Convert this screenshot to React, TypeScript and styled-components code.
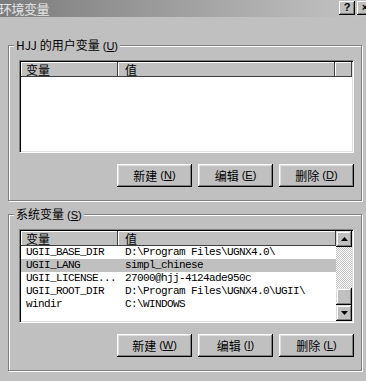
import React from 'react';
import styled, { createGlobalStyle } from 'styled-components';

const GlobalStyle = createGlobalStyle`
  html, body {
    margin: 0;
    background: #c0c0c0;
  }
`;

const Window = styled.div`
  width: 366px;
  height: 381px;
  overflow: hidden;
  background: #c0c0c0;
  font-family: "Noto Sans CJK SC", "DejaVu Sans", sans-serif;
  font-size: 12px;
  color: #000;
  display: flex;
  flex-direction: column;
`;

const TitleBar = styled.div`
  height: 17px;
  flex-shrink: 0;
  display: flex;
  align-items: center;
  justify-content: space-between;
  background: linear-gradient(to right, #7c7c7c, #c4c4c4);
`;

const Title = styled.span`
  color: #e6e6e6;
  font-size: 13px;
  line-height: 17px;
  margin-left: -1px;
  letter-spacing: -0.5px;
`;

const TitleButtons = styled.div`
  display: flex;
  gap: 2px;
  margin-right: -7px;
  align-self: flex-start;
  padding-top: 1px;
`;

const CaptionButton = styled.div`
  width: 16px;
  height: 14px;
  box-sizing: border-box;
  background: #c0c0c0;
  box-shadow: inset -1px -1px #000, inset 1px 1px #fff, inset -2px -2px #808080;
  display: flex;
  align-items: center;
  justify-content: center;
  font-family: "Liberation Sans", sans-serif;
  font-weight: bold;
  font-size: 11px;
  line-height: 1;
  padding-bottom: 1px;
`;

const Group = styled.fieldset<{ $first?: boolean }>`
  margin: ${p => (p.$first ? '21px' : '6px')} 0 0 8px;
  width: 354px;
  box-sizing: border-box;
  padding: 8px 7px 13px 10px;
  border: 1px solid #808080;
  box-shadow: inset 1px 1px 0 #fff, 1px 1px 0 #fff;
  min-width: 0;
`;

const Legend = styled.legend`
  padding: 0 2px;
  margin-left: -5px;
  line-height: 14px;
  height: 14px;
  background: #c0c0c0;
  white-space: nowrap;
`;

const Key = styled.span`
  font-family: "Liberation Sans", sans-serif;
  font-size: 11px;
  margin-left: 3px;

  & u {
    text-underline-offset: 1px;
  }
`;

const ListBox = styled.div<{ $height: number }>`
  width: 335px;
  height: ${p => p.$height}px;
  box-sizing: border-box;
  background: #fff;
  border: 1px solid;
  border-color: #808080 #fff #fff #808080;
  box-shadow: inset 1px 1px #000, inset -1px -1px #dfdfdf;
  padding: 1px;
  display: flex;
  overflow: hidden;
`;

const ListBody = styled.div`
  flex: 1;
  display: flex;
  flex-direction: column;
  min-width: 0;
`;

const Header = styled.div`
  display: flex;
  height: 15px;
  flex-shrink: 0;
`;

const HeaderCell = styled.div<{ $width?: number; $first?: boolean }>`
  ${p => (p.$width ? `width: ${p.$width}px;` : 'flex: 1;')}
  flex-shrink: 0;
  box-sizing: border-box;
  background: #c0c0c0;
  box-shadow: inset -1px -1px #404040, inset 1px 1px #fff;
  padding-left: ${p => (p.$first ? 5 : 7)}px;
  font-size: 12px;
  line-height: 15px;
  white-space: nowrap;
`;

const Row = styled.div<{ $selected?: boolean }>`
  display: flex;
  height: 13px;
  background: ${p => (p.$selected ? '#c0c0c0' : 'transparent')};
  font-family: "Liberation Mono", monospace;
  font-size: 11px;
  letter-spacing: -0.6px;
  line-height: 13px;
  white-space: nowrap;
`;

const Cell = styled.div<{ $width?: number }>`
  ${p => (p.$width ? `width: ${p.$width}px;` : 'flex: 1;')}
  box-sizing: border-box;
  padding-left: ${p => (p.$width ? 5 : 7)}px;
  overflow: hidden;
`;

const ScrollBar = styled.div`
  width: 16px;
  flex-shrink: 0;
  display: flex;
  flex-direction: column;
`;

const ScrollButton = styled.div`
  width: 16px;
  height: 16px;
  box-sizing: border-box;
  background: #c0c0c0;
  box-shadow: inset -1px -1px #000, inset 1px 1px #dfdfdf, inset -2px -2px #808080, inset 2px 2px #fff;
  display: flex;
  align-items: center;
  justify-content: center;
`;

const Track = styled.div`
  flex: 1;
  display: flex;
  flex-direction: column;
  justify-content: flex-end;
  background: repeating-conic-gradient(#c0c0c0 0 25%, #fff 0 50%) 0 0 / 2px 2px;
`;

const Thumb = styled.div`
  height: 17px;
  box-sizing: border-box;
  background: #c0c0c0;
  box-shadow: inset -1px -1px #000, inset 1px 1px #dfdfdf, inset -2px -2px #808080, inset 2px 2px #fff;
`;

const ButtonRow = styled.div`
  display: flex;
  justify-content: flex-end;
  gap: 6px;
  margin-top: 11px;
`;

const Button = styled.button`
  width: 75px;
  height: 23px;
  margin: 0;
  padding: 0 0 1px;
  border: none;
  background: #c0c0c0;
  box-shadow: inset -1px -1px #000, inset 1px 1px #fff, inset -2px -2px #808080, inset 2px 2px #dfdfdf;
  font-family: "Noto Sans CJK SC", sans-serif;
  font-size: 12px;
  color: #000;
  display: flex;
  align-items: center;
  justify-content: center;
`;

const Arrow = ({ up }: { up?: boolean }) => (
  <svg width="7" height="4" viewBox="0 0 7 4">
    <path d={up ? 'M3.5 0 L7 4 L0 4 Z' : 'M0 0 L7 0 L3.5 4 Z'} fill="#000" />
  </svg>
);

const Mnemonic = ({ k }: { k: string }) => (
  <Key>
    (<u>{k}</u>)
  </Key>
);

const systemVars = [
  ['UGII_BASE_DIR', 'D:\\Program Files\\UGNX4.0\\'],
  ['UGII_LANG', 'simpl_chinese'],
  ['UGII_LICENSE...', '27000@hjj-4124ade950c'],
  ['UGII_ROOT_DIR', 'D:\\Program Files\\UGNX4.0\\UGII\\'],
  ['windir', 'C:\\WINDOWS'],
];

const App = (): React.ReactElement => {
  return (
    <>
      <GlobalStyle />
      <Window>
        <TitleBar>
          <Title>环境变量</Title>
          <TitleButtons>
            <CaptionButton>?</CaptionButton>
            <CaptionButton>×</CaptionButton>
          </TitleButtons>
        </TitleBar>

        <Group $first>
          <Legend>
            HJJ 的用户变量<Mnemonic k="U" />
          </Legend>
          <ListBox $height={93}>
            <ListBody>
              <Header>
                <HeaderCell $width={97} $first>变量</HeaderCell>
                <HeaderCell $width={217}>值</HeaderCell>
                <HeaderCell />
              </Header>
            </ListBody>
          </ListBox>
          <ButtonRow>
            <Button>新建<Mnemonic k="N" /></Button>
            <Button>编辑<Mnemonic k="E" /></Button>
            <Button>删除<Mnemonic k="D" /></Button>
          </ButtonRow>
        </Group>

        <Group>
          <Legend>
            系统变量<Mnemonic k="S" />
          </Legend>
          <ListBox $height={94}>
            <ListBody>
              <Header>
                <HeaderCell $width={97} $first>变量</HeaderCell>
                <HeaderCell>值</HeaderCell>
              </Header>
              {systemVars.map(([name, value]) => (
                <Row key={name} $selected={name === 'UGII_LANG'}>
                  <Cell $width={97}>{name}</Cell>
                  <Cell>{value}</Cell>
                </Row>
              ))}
            </ListBody>
            <ScrollBar>
              <ScrollButton><Arrow up /></ScrollButton>
              <Track>
                <Thumb />
              </Track>
              <ScrollButton><Arrow /></ScrollButton>
            </ScrollBar>
          </ListBox>
          <ButtonRow>
            <Button>新建<Mnemonic k="W" /></Button>
            <Button>编辑<Mnemonic k="I" /></Button>
            <Button>删除<Mnemonic k="L" /></Button>
          </ButtonRow>
        </Group>
      </Window>
    </>
  );
};

export default App;
